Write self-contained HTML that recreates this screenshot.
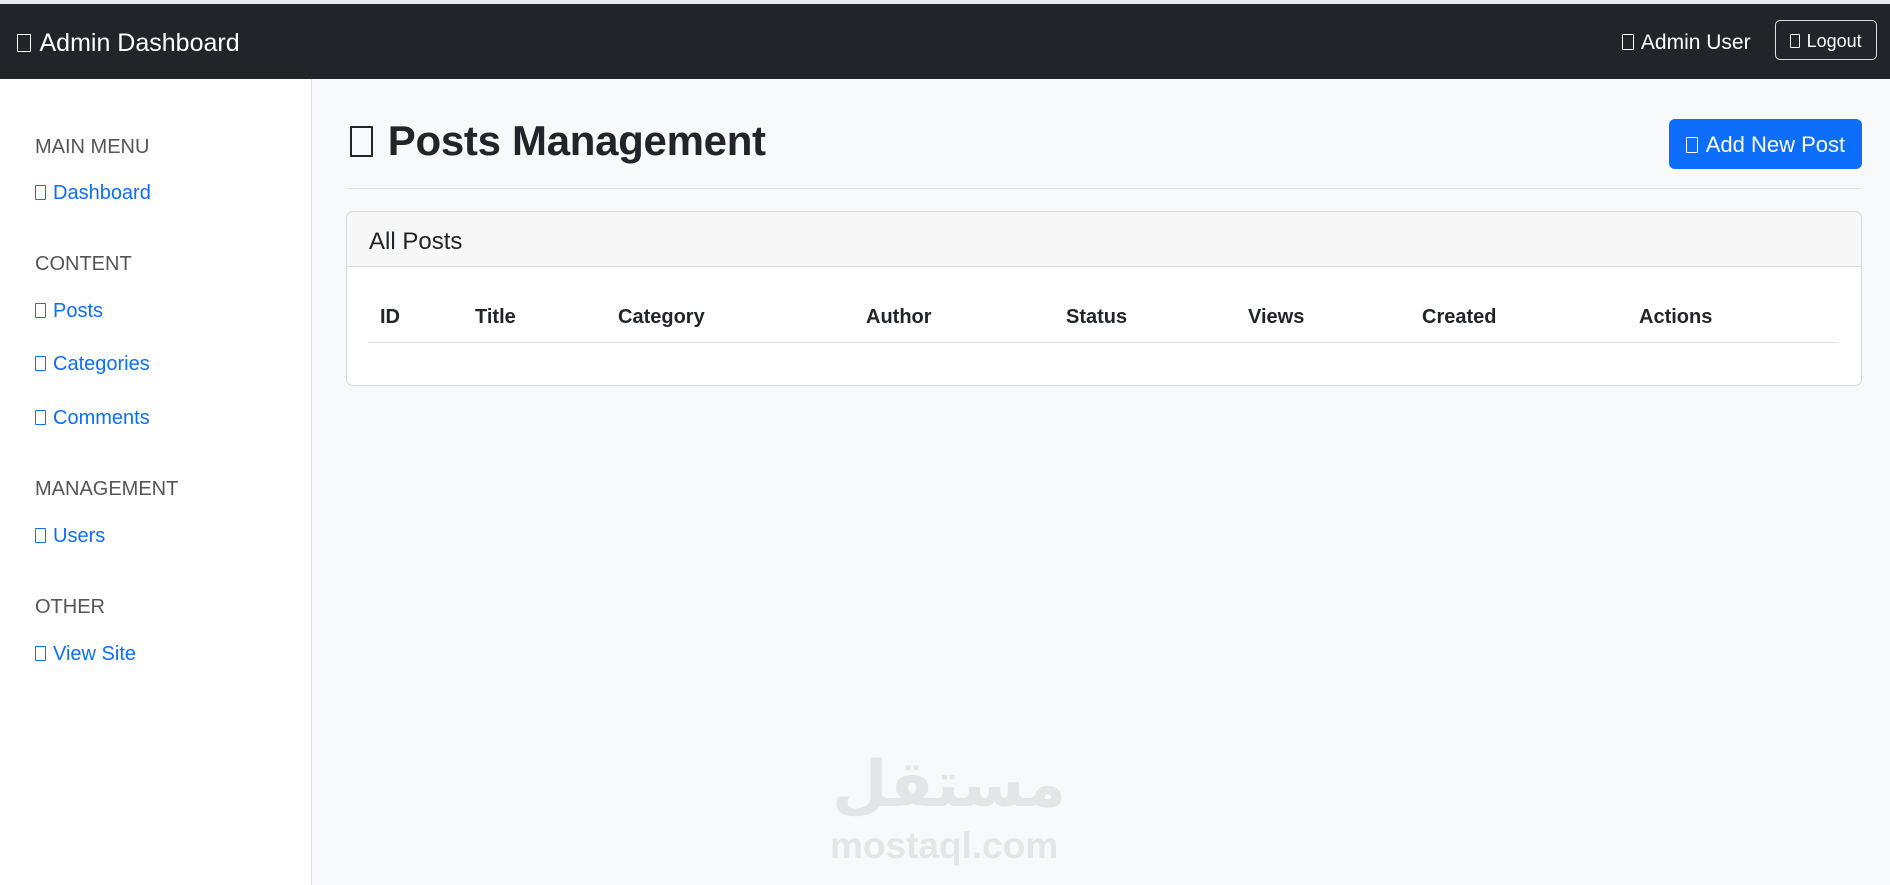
<!DOCTYPE html>
<html><head><meta charset="utf-8"><style>
*{margin:0;padding:0;box-sizing:border-box}
body{width:1890px;height:885px;overflow:hidden;background:#f8f9fa;font-family:"Liberation Sans",sans-serif;position:relative;color:#212529}
.a{position:absolute;white-space:nowrap}
.ic{display:inline-block;width:.55em;height:.75em;border:1.5px solid currentColor;vertical-align:-0.05em;margin-right:.35em;border-radius:1px}
nav{position:absolute;left:0;top:4px;width:1890px;height:75px;background:#212529}
.side{position:absolute;left:0;top:79px;width:312px;height:806px;background:#fff;border-right:1px solid #dee2e6}
.h{color:#555;font-size:20px}
.l{color:#0d6efd;font-size:20px}
.th{font-weight:bold;font-size:20px;top:306px}
</style></head><body>
<div class="a" style="left:0;top:0;width:1890px;height:4px;background:#e9ecef"></div>
<nav></nav>
<div class="a" style="left:17px;top:29px;color:#fff;font-size:25px"><span class="ic"></span>Admin Dashboard</div>
<div class="a" style="left:1622px;top:31px;color:#fff;font-size:21px"><span class="ic"></span>Admin User</div>
<div class="a" style="left:1775px;top:20px;width:102px;height:40px;border:1px solid #ddd;border-radius:5px;color:#fff;font-size:18px;line-height:40px;text-align:center"><span class="ic"></span>Logout</div>
<div class="side"></div>
<div class="a h" style="left:35px;top:136px">MAIN MENU</div>
<div class="a l" style="left:35px;top:182px"><span class="ic"></span>Dashboard</div>
<div class="a h" style="left:35px;top:253px">CONTENT</div>
<div class="a l" style="left:35px;top:300px"><span class="ic"></span>Posts</div>
<div class="a l" style="left:35px;top:353px"><span class="ic"></span>Categories</div>
<div class="a l" style="left:35px;top:407px"><span class="ic"></span>Comments</div>
<div class="a h" style="left:35px;top:478px">MANAGEMENT</div>
<div class="a l" style="left:35px;top:525px"><span class="ic"></span>Users</div>
<div class="a h" style="left:35px;top:596px">OTHER</div>
<div class="a l" style="left:35px;top:643px"><span class="ic"></span>View Site</div>
<div class="a" style="left:350px;top:117px;font-size:42px;font-weight:bold;letter-spacing:-0.3px"><span class="ic" style="border-width:2px;font-weight:normal"></span>Posts Management</div>
<div class="a" style="left:1669px;top:119px;width:193px;height:50px;background:#0d6efd;border-radius:6px;color:#fff;font-size:22px;line-height:52px;text-align:center"><span class="ic"></span>Add New Post</div>
<div class="a" style="left:346px;top:188px;width:1516px;height:1px;background:#dee2e6"></div>
<div class="a" style="left:346px;top:211px;width:1516px;height:175px;background:#fff;border:1px solid #d5d8db;border-radius:7px;overflow:hidden">
<div style="height:55px;background:#f7f7f7;border-bottom:1px solid #d5d8db"></div></div>
<div class="a" style="left:369px;top:228px;font-size:24px">All Posts</div>
<div class="a th" style="left:380px">ID</div>
<div class="a th" style="left:475px">Title</div>
<div class="a th" style="left:618px">Category</div>
<div class="a th" style="left:866px">Author</div>
<div class="a th" style="left:1066px">Status</div>
<div class="a th" style="left:1248px">Views</div>
<div class="a th" style="left:1422px">Created</div>
<div class="a th" style="left:1639px">Actions</div>
<div class="a" style="left:368px;top:342px;width:1470px;height:1px;background:#dee2e6"></div>
<div class="a" style="left:832px;top:748px;font-size:64px;font-weight:bold;color:#e4e5e7;font-family:'DejaVu Sans',sans-serif">مستقل</div>
<div class="a" style="left:830px;top:825px;font-size:37px;font-weight:bold;color:#e4e5e7">mostaql.com</div>
</body></html>
